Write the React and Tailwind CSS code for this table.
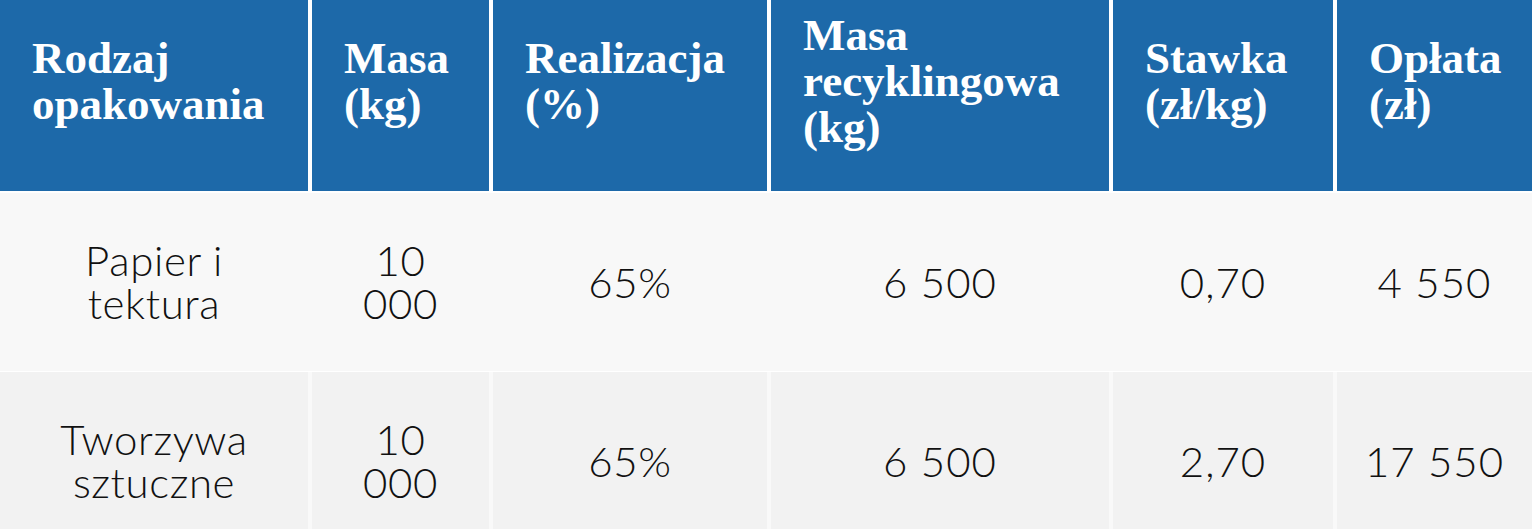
import React from "react";

const cols = ["w-[308px]", "w-[177px]", "w-[274px]", "w-[338px]", "w-[220px]", "flex-1"];

const headers = [
  ["Rodzaj", "opakowania"],
  ["Masa", "(kg)"],
  ["Realizacja", "(%)"],
  ["Masa", "recyklingowa", "(kg)"],
  ["Stawka", "(zł/kg)"],
  ["Opłata", "(zł)"],
];

const rows = [
  [["Papier i", "tektura"], ["10", "000"], ["65%"], ["6 500"], ["0,70"], ["4 550"]],
  [["Tworzywa", "sztuczne"], ["10", "000"], ["65%"], ["6 500"], ["2,70"], ["17 550"]],
];

export default function App() {
  return (
    <div className="w-[1532px] h-[529px] overflow-hidden bg-white">
      <div className="flex gap-[4px] h-[191px]">
        {headers.map((h, i) => (
          <div
            key={i}
            className={`${cols[i]} shrink-0 bg-[#1d69a9] flex flex-col justify-center pl-[32px] pb-[30px] text-white font-bold text-[45px] leading-[46px] font-['Liberation_Serif',serif]`}
          >
            {h.map((l, j) => (
              <span key={j}>{l}</span>
            ))}
          </div>
        ))}
      </div>
      <div className="h-[2px] bg-white" />
      {rows.map((r, ri) => (
        <div
          key={ri}
          className={`flex gap-[4px] h-[178px] ${ri === 0 ? "bg-[#f8f8f8] mb-[1px]" : "bg-[#f9f9f9]"}`}
        >
          {r.map((c, ci) => (
            <div
              key={ci}
              className={`${cols[ci]} shrink-0 flex flex-col items-center justify-center text-center text-[#111] font-['Lato',sans-serif] font-light text-[42px] leading-[43px] ${
                ri === 0 ? "bg-[#f8f8f8]" : "bg-[#f2f2f2]"
              } ${ci < 3 ? "tracking-[0.6px]" : "tracking-[1px]"}`}
            >
              {c.map((l, j) => (
                <span key={j}>{l}</span>
              ))}
            </div>
          ))}
        </div>
      ))}
    </div>
  );
}
